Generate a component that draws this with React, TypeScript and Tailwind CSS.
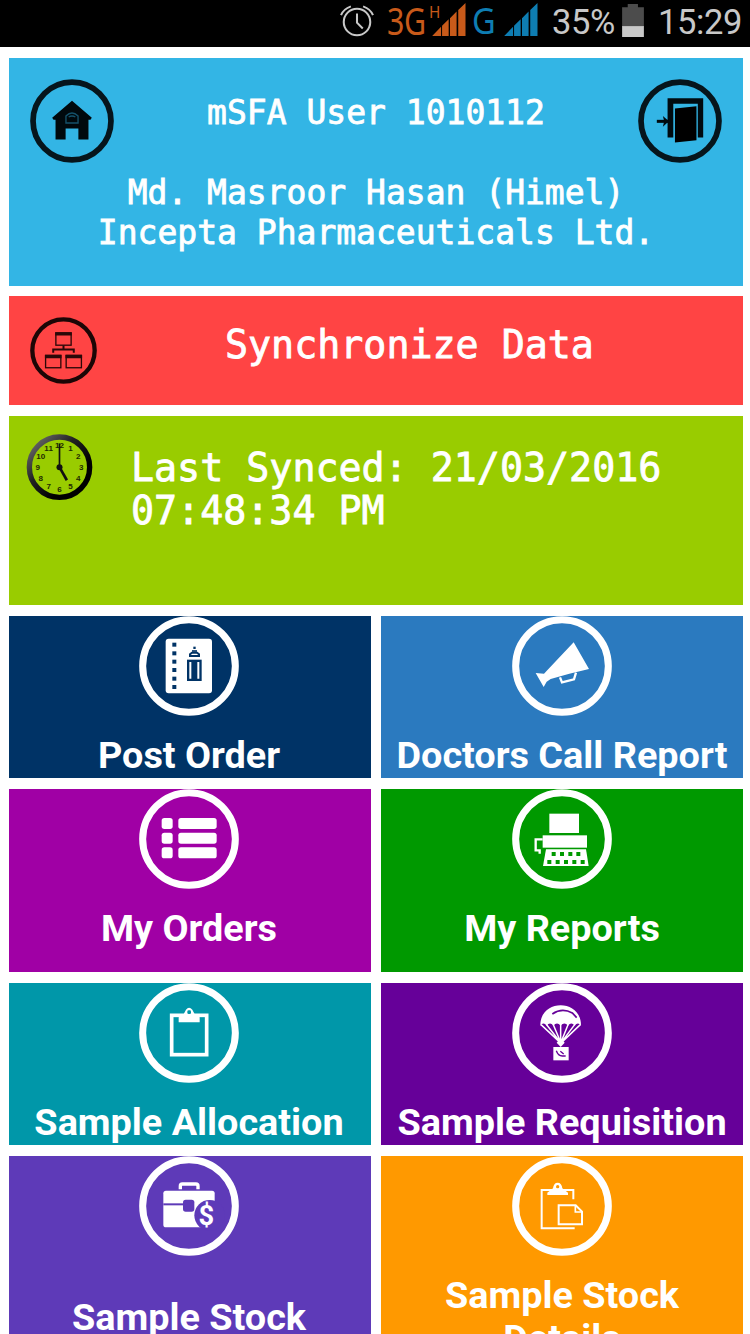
import React from 'react';

interface Tile {
    label: string;
    bg: string;
    labelClass?: string;
    icon: React.ReactNode;
}

const tileRows: { height: string; tiles: Tile[] }[] = [
    {
        height: 'h-[162px]',
        tiles: [
            {
                label: 'Post Order',
                bg: 'bg-[#003366] text-[#003366]',
                icon: (
                    <>
                        <rect x="80" y="68" width="139" height="164" rx="9" fill="#fff" />
                        {[86, 112, 137, 162, 188, 213].map((y) => (
                            <rect key={y} x="100" y={y - 6} width="12" height="12" fill="currentColor" />
                        ))}
                        <rect x="144" y="131" width="44" height="64" fill="currentColor" />
                        <path d="M154 138v50M178 138v50" stroke="#fff" strokeWidth="6" />
                        <path d="M153 120V115L159 110H174L180 115V120Z" fill="none" stroke="currentColor" strokeWidth="6" />
                        <rect x="163" y="92" width="7" height="7" fill="currentColor" />
                        <path d="M159 105h15" stroke="currentColor" strokeWidth="5" />
                    </>
                ),
            },
            {
                label: 'Doctors Call Report',
                bg: 'bg-[#2b7abf] text-[#2b7abf]',
                icon: (
                    <>
                        <path d="M185 79L231 159L172 173L116 189L104 197L95 213L71 171L96 173L110 158Z" fill="#fff" />
                        <path d="M144 184l6 15l36-9l6-20" fill="none" stroke="#fff" strokeWidth="7" />
                    </>
                ),
            },
        ],
    },
    {
        height: 'h-[183px]',
        tiles: [
            {
                label: 'My Orders',
                bg: 'bg-[#a000a5] text-[#a000a5]',
                icon: (
                    <>
                        {[87, 131, 175].map((y) => (
                            <g key={y} fill="#fff">
                                <rect x="68" y={y} width="33" height="33" rx="8" />
                                <rect x="118" y={y} width="115" height="33" rx="8" />
                            </g>
                        ))}
                    </>
                ),
            },
            {
                label: 'My Reports',
                bg: 'bg-[#009900] text-[#009900]',
                icon: (
                    <>
                        <rect x="112" y="74" width="89" height="58" fill="#fff" />
                        <rect x="92" y="139" width="133" height="37" fill="#fff" />
                        <path d="M102 181H222L230 231H93Z" fill="#fff" />
                        <path d="M92 151H71V184H83V194" fill="none" stroke="#fff" strokeWidth="7" />
                        {[125, 150, 175, 199].map((x) => (
                            <rect key={x} x={x - 6} y="189" width="12" height="12" fill="currentColor" />
                        ))}
                        {[112, 137, 162, 187, 212].map((x) => (
                            <rect key={x} x={x - 6} y="213" width="12" height="12" fill="currentColor" />
                        ))}
                    </>
                ),
            },
        ],
    },
    {
        height: 'h-[162px]',
        tiles: [
            {
                label: 'Sample Allocation',
                bg: 'bg-[#0097a9] text-[#0097a9]',
                icon: (
                    <>
                        <rect x="98" y="97" width="105" height="118" fill="none" stroke="#fff" strokeWidth="11" />
                        <path d="M119 118V103L133 95L141 80Q150 68 160 80L168 95L182 103V118Z" fill="#fff" />
                        <rect x="145" y="82" width="11" height="11" rx="4" fill="currentColor" />
                    </>
                ),
            },
            {
                label: 'Sample Requisition',
                bg: 'bg-[#660099] text-[#660099]',
                icon: (
                    <>
                        <path d="M85 128C84 88 115 67 146 67S208 88 207 128Q198 115 188 128Q178 115 168 128Q157 115 146 128Q135 115 124 128Q114 115 104 128Q94 115 85 128Z" fill="#fff" />
                        <path d="M121 93Q150 73 181 90L194 104" fill="none" stroke="currentColor" strokeWidth="5" />
                        <path d="M87 125L144 178M104 125L145 178M124 125L146 178M146 125V178M168 125L147 178M188 125L148 178M205 125L149 178" stroke="#fff" strokeWidth="4.5" />
                        <path d="M146 166l12 13l-12 13l-12-13z" fill="#fff" />
                        <rect x="124" y="192" width="46" height="40" fill="#fff" />
                        <path d="M133 203q5 15 18 16h10M145 205l10 8" fill="none" stroke="currentColor" strokeWidth="4" />
                    </>
                ),
            },
        ],
    },
    {
        height: 'h-[206px]',
        tiles: [
            {
                label: 'Sample Stock',
                bg: 'bg-[#5e3ab8] text-[#5e3ab8]',
                labelClass: 'pt-[22px]',
                icon: (
                    <>
                        <path d="M124 100V90Q124 84 130 84H171Q177 84 177 90V100" fill="none" stroke="#fff" strokeWidth="10" />
                        <rect x="73" y="104" width="154" height="110" rx="8" fill="#fff" />
                        <path d="M73 145H165" stroke="currentColor" strokeWidth="6" />
                        <rect x="132" y="131" width="34" height="36" rx="8" fill="currentColor" />
                        <circle cx="212" cy="178" r="46" fill="currentColor" />
                        <text x="202" y="206" textAnchor="middle" fill="#fff" className="font-['Roboto',sans-serif] text-[82px] font-bold">$</text>
                    </>
                ),
            },
            {
                label: 'Sample Stock Details',
                bg: 'bg-[#ff9900] text-[#ff9900]',
                icon: (
                    <>
                        <path d="M184 130V102H89V217H188" fill="none" stroke="#fff" strokeWidth="6" />
                        <path d="M106 117V110L123 97Q125 80 137 80T151 97L168 110V117Z" fill="#fff" />
                        <circle cx="137" cy="92" r="5" fill="currentColor" />
                        <path d="M140 148H191L210 167V205H140Z" fill="none" stroke="#fff" strokeWidth="6" />
                        <path d="M190 148V168H210" fill="none" stroke="#fff" strokeWidth="5" />
                    </>
                ),
            },
        ],
    },
];

const HomeIcon = () => (
    <svg viewBox="0 0 250 250" className="size-[84px] shrink-0">
        <circle cx="125" cy="125" r="116" fill="none" stroke="#06151c" strokeWidth="17" />
        <path d="M125 65L184 115L180 121H174V180H144V147H106V180H76V121H70L66 115Z" fill="#00090d" />
        <path d="M107 131V110Q125 92 143 110V131Z" fill="none" stroke="#14526b" strokeWidth="4" />
        <path d="M115 113q10-6 20 0" fill="none" stroke="#14526b" strokeWidth="4" />
    </svg>
);

const ExitIcon = () => (
    <svg viewBox="0 0 250 250" className="size-[84px] shrink-0">
        <circle cx="125" cy="125" r="116" fill="none" stroke="#06151c" strokeWidth="17" />
        <path d="M88 174V57H194V174H178V74H105V174Z" fill="#000b10" />
        <path d="M110 88L174 81V182L110 189Z" fill="#000" />
        <path d="M56 126H90" stroke="#000b10" strokeWidth="9" />
        <path d="M74 110L92 126L74 142L78 126Z" fill="#000b10" />
    </svg>
);

const NetworkIcon = () => (
    <svg viewBox="0 0 202 202" className="size-[67px] shrink-0">
        <circle cx="101" cy="101" r="94" fill="none" stroke="#1c0606" strokeWidth="13" />
        <g fill="none" stroke="#2a0808" strokeWidth="4">
            <rect x="78" y="48" width="46" height="37" />
            <rect x="47" y="116" width="46" height="37" />
            <rect x="109" y="116" width="46" height="37" />
            <path d="M101 86V98M70 108V98H132V108" strokeWidth="6" />
        </g>
        <path d="M76 46h50v10h-50zM45 114h50v10h-50zM107 114h50v10h-50z" fill="#2a0808" />
    </svg>
);

const ClockIcon = () => (
    <svg viewBox="0 0 200 200" className="size-[67px] shrink-0">
        <defs>
            <linearGradient id="rim" x1="0" y1="0" x2="0.7" y2="0.7">
                <stop offset="0" stopColor="#777" />
                <stop offset="0.55" stopColor="#222" />
                <stop offset="1" stopColor="#000" />
            </linearGradient>
        </defs>
        <circle cx="100" cy="99" r="90" fill="none" stroke="url(#rim)" strokeWidth="16" />
        <g fill="#1f2a00" textAnchor="middle" className="font-['Liberation_Sans',sans-serif] text-[24px] font-bold">
            {[12, 1, 2, 3, 4, 5, 6, 7, 8, 9, 10, 11].map((n, i) => (
                <text
                    key={n}
                    x={100 + 65 * Math.sin((i * Math.PI) / 6)}
                    y={108 - 65 * Math.cos((i * Math.PI) / 6)}
                >
                    {n}
                </text>
            ))}
        </g>
        <path d="M100 99V28" stroke="#111" strokeWidth="5" />
        <path d="M100 99L122 138" stroke="#111" strokeWidth="8" />
        <circle cx="100" cy="99" r="9" fill="#111" />
    </svg>
);

const AlarmIcon = () => (
    <svg viewBox="0 0 100 100" className="size-[34px] shrink-0" fill="none" stroke="#c8c8c8" strokeWidth="6">
        <circle cx="50" cy="53" r="39" />
        <path d="M50 28V55L67 72M3 33Q10 15 32 7M97 33Q90 15 68 7" />
    </svg>
);

const SignalBars = ({ color }: { color: string }) => (
    <svg viewBox="0 0 102 100" className="h-[33px] w-[34px] shrink-0" fill={color}>
        <path d="M0 100L27 72V100ZM30 69L50 49V100H30ZM54 46L74 26V100H54ZM79 21L101 0V100H79Z" />
    </svg>
);

const BatteryIcon = () => (
    <svg viewBox="0 0 66 100" className="h-[33px] w-[22px] shrink-0">
        <path d="M0 10H17V0H48V10H66V70H0Z" fill="#4c4c4c" />
        <path d="M0 67H66V100H0Z" fill="#c8c8c8" />
    </svg>
);

const StatusBar = () => (
    <div className="flex h-[47px] items-start whitespace-nowrap bg-black font-['Roboto',sans-serif] text-[34.5px] leading-[45px] tracking-[-0.4px] text-[#c8c8c8]">
        <div className="ml-[340px] mt-[4px]"><AlarmIcon /></div>
        <span className="ml-[13px] -mr-[10px] w-[52px] shrink-0 origin-left scale-x-[0.8] font-['Noto_Sans',sans-serif] text-[38px] leading-[41px] text-[#c85a1a]">3G</span>
        <span className="mt-[2px] w-[14px] shrink-0 origin-left scale-x-[0.9] font-['Noto_Sans',sans-serif] text-[17px] leading-[19px] text-[#c85a1a]">H</span>
        <div className="-ml-[11px] mt-[3px]"><SignalBars color="#c85a1a" /></div>
        <span className="ml-[6px] mr-[4px] w-[28px] shrink-0 origin-left scale-x-[0.88] font-['Noto_Sans',sans-serif] text-[37px] leading-[39px] text-[#0e7db2]">G</span>
        <div className="mt-[3px]"><SignalBars color="#0e7db2" /></div>
        <span className="ml-[14px] w-[62px]">35%</span>
        <div className="ml-[8px] mt-[4px]"><BatteryIcon /></div>
        <span className="ml-[14px]">15:29</span>
    </div>
);

const MenuTile: React.FC<{ tile: Tile; height: string }> = ({ tile, height }) => (
    <div className={`flex flex-col items-center first:pr-[2px] ${height} ${tile.bg}`}>
        <svg viewBox="0 0 300 300" className="size-[100px] shrink-0">
            <circle cx="150" cy="150" r="139" fill="none" stroke="#fff" strokeWidth="21" />
            {tile.icon}
        </svg>
        <span className={`mt-[18px] px-[10px] text-center text-white ${tile.labelClass ?? ''}`}>
            {tile.label}
        </span>
    </div>
);

const App: React.FC = () => {
    return (
        <div className="h-[1334px] w-[750px] overflow-hidden bg-white">
            <StatusBar />

            <main className="flex flex-col gap-[11px] pl-[9px] pr-[7px] pt-[11px]">
                <header className="-mb-[1px] flex h-[228px] flex-col bg-[#33b5e5] px-[21px] pt-[21px] font-['DejaVu_Sans_Mono',monospace] text-[33px] leading-[40px] text-white [-webkit-text-stroke:0.8px_white]">
                    <div className="flex h-[94px] justify-between">
                        <HomeIcon />
                        <p className="mt-[14px]">mSFA User 1010112</p>
                        <ExitIcon />
                    </div>
                    <p className="text-center">
                        Md. Masroor Hasan (Himel)
                        <br />
                        Incepta Pharmaceuticals Ltd.
                    </p>
                </header>

                <section className="flex h-[109px] bg-[#ff4444] pl-[21px] pt-[21px] font-['DejaVu_Sans_Mono',monospace] text-[38.3px] leading-[43px] text-white [-webkit-text-stroke:0.8px_white]">
                    <NetworkIcon />
                    <p className="ml-[128px] mt-[6px]">Synchronize Data</p>
                </section>

                <section className="flex h-[189px] bg-[#99cc00] pl-[17px] pt-[18px] font-['DejaVu_Sans_Mono',monospace] text-[38.3px] leading-[43px] text-white [-webkit-text-stroke:0.8px_white]">
                    <div className="[-webkit-text-stroke:0]">
                        <ClockIcon />
                    </div>
                    <p className="ml-[38px] mt-[12px]">
                        Last Synced: 21/03/2016
                        <br />
                        07:48:34 PM
                    </p>
                </section>

                {tileRows.map((row) => (
                    <div
                        key={row.tiles[0].label}
                        className="grid grid-cols-2 gap-[10px] font-['Roboto',sans-serif] text-[37.8px] font-bold leading-[43px]"
                    >
                        {row.tiles.map((tile) => (
                            <MenuTile key={tile.label} tile={tile} height={row.height} />
                        ))}
                    </div>
                ))}
            </main>
        </div>
    );
};

export default App;
